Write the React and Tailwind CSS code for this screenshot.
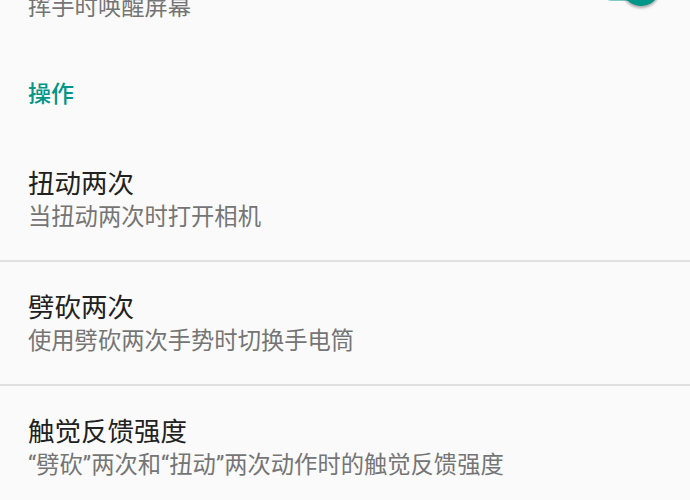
import React from 'react'

const FONT = { fontFamily: 'Roboto, "Noto Sans CJK SC", "Noto Sans", sans-serif' }

const ITEMS = [
  { title: '扭动两次', summary: '当扭动两次时打开相机' },
  { title: '劈砍两次', summary: '使用劈砍两次手势时切换手电筒' },
  { title: '触觉反馈强度', summary: '“劈砍”两次和“扭动”两次动作时的触觉反馈强度' },
]

function Row({ title, summary, last }) {
  return (
    <div>
      <div className="px-[28px] pt-[29px] pb-[28px]">
        <div className="text-[26.5px] leading-[33px] text-[#212121]">{title}</div>
        <div className="mt-[2px] text-[23.3px] leading-[30px] text-[#757575]">{summary}</div>
      </div>
      {!last && <div className="h-[2px] bg-[#e0e0e0]" />}
    </div>
  )
}

export default function App() {
  return (
    <div className="relative w-[690px] h-[500px] overflow-hidden bg-[#fafafa]" style={FONT}>
      {/* switch from the row above, cut off by the top edge */}
      <div className="absolute right-[29px] top-[-26px] w-[62px] h-[27px] rounded-full bg-[#80cbc4]" />
      <div className="absolute left-[622px] top-[-32px] w-[38px] h-[38px] rounded-full bg-[#009688] shadow-[0_2px_3px_rgba(0,0,0,0.35)]" />

      <div className="-mt-[8px] px-[28px] text-[23.3px] leading-[30px] text-[#757575]">挥手时唤醒屏幕</div>

      <div className="mt-[57px] px-[28px] text-[23px] leading-[32px] font-medium text-[#009688]">操作</div>

      <div className="mt-[27px]">
        {ITEMS.map((it, i) => (
          <Row key={it.title} {...it} last={i === ITEMS.length - 1} />
        ))}
      </div>
    </div>
  )
}
